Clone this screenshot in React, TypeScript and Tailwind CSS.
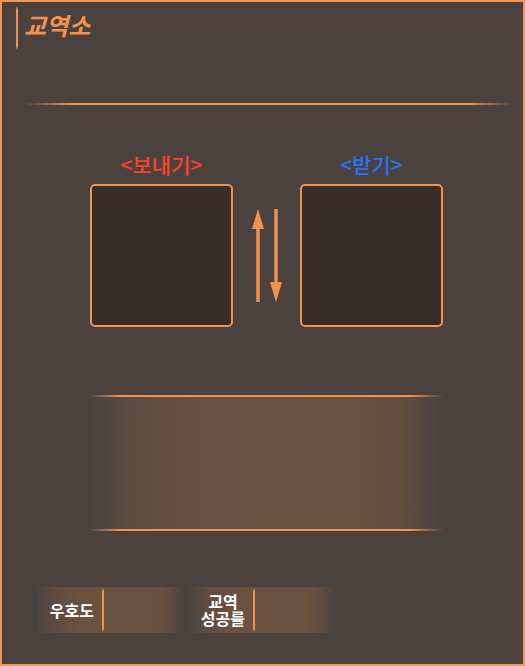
import type { ReactNode } from "react";

const fontStack = "font-['Noto_Sans_CJK_KR','Noto_Sans',sans-serif]";

function FadedRule({ className = "" }: { className?: string }) {
  return (
    <div
      className={`h-[2px] bg-[linear-gradient(to_right,transparent,#f3924b_9%,#f3924b_91%,transparent)] ${className}`}
    />
  );
}

function VerticalRule() {
  return (
    <div className="h-11 w-[2px] shrink-0 bg-[linear-gradient(to_bottom,transparent,#f3924b_8%,#f3924b_92%,transparent)]" />
  );
}

function Slot({ label, color }: { label: string; color: string }) {
  return (
    <section className="w-[143px]">
      <h2 className={`text-center text-[21px] leading-8 font-medium ${color}`}>{label}</h2>
      <div className="mt-1 h-[143px] rounded-[5px] border-2 border-[#f3924b] bg-[#372d2b]" />
    </section>
  );
}

function ExchangeArrows() {
  return (
    <svg viewBox="-1 0 31 93" className="mt-[61px] h-[93px] w-[31px]" fill="#f3924b" aria-hidden="true">
      <path d="M6 0 12 20H7.7V93H4.3V20H0Z" />
      <path d="M22.3 0h3.4V73H30L24 93 18 73h4.3Z" />
    </svg>
  );
}

function Stat({ children }: { children: ReactNode }) {
  return (
    <div className="flex h-[46px] w-[147px] items-center bg-[linear-gradient(to_right,transparent,#5f4c40_14%,#6b5140_30%,#6b5140_82%,#5f4c40_91%,transparent)]">
      <div className="flex w-[66px] justify-end pr-2">
        <p className="text-center text-base leading-[17px] font-bold text-white">{children}</p>
      </div>
      <VerticalRule />
    </div>
  );
}

export default function App() {
  return (
    <main className={`min-h-screen border-2 border-[#f3984f] bg-[#4b4240] text-[#f3924b] ${fontStack}`}>
      <header className="flex gap-[6px] pt-1 pl-[14px]">
        <VerticalRule />
        <h1 className="text-2xl leading-[38px] font-bold italic">교역소</h1>
      </header>
      <FadedRule className="mt-[53px] mr-[10px] ml-6" />

      <div className="mt-[43px] flex justify-center gap-[18px] pl-2">
        <Slot label="<보내기>" color="text-[#f9442a]" />
        <ExchangeArrows />
        <Slot label="<받기>" color="text-[#2574f5]" />
      </div>

      <section className="mt-[68px] mr-20 ml-[86px]">
        <FadedRule />
        <div className="h-[132px] bg-[linear-gradient(to_right,transparent_1%,#5f4c40_14%,#6b5141_30%,#6b5140_76%,#654f40_87%,transparent_99%)]" />
        <FadedRule />
      </section>

      <footer className="mt-14 flex gap-1 pl-[34px]">
        <Stat>우호도</Stat>
        <Stat>
          교역
          <br />
          성공률
        </Stat>
      </footer>
    </main>
  );
}
